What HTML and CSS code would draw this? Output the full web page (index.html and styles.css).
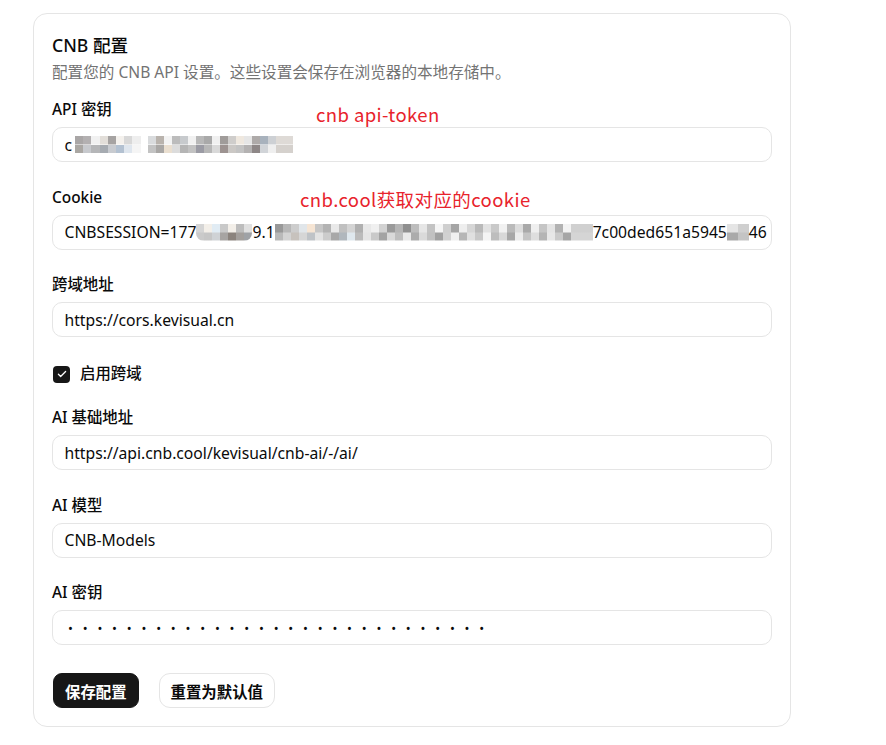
FILE: index.html
```html
<!DOCTYPE html>
<html lang="zh-CN">
<head>
<meta charset="utf-8">
<title>CNB 配置</title>
<link rel="stylesheet" href="styles.css">
</head>
<body>
<div class="page">
  <section class="card">
    <h1 class="title">CNB 配置</h1>
    <p class="subtitle">配置您的 CNB API 设置。这些设置会保存在浏览器的本地存储中。</p>
    <div class="form">
      <div class="field">
        <label class="label">API 密钥</label>
        <div class="input"><span>c</span><span class="mosaic m-api1"></span><span class="mosaic m-api2"></span></div>
        <span class="note note-token">cnb api-token</span>
      </div>
      <div class="field">
        <label class="label">Cookie</label>
        <div class="input"><span>CNBSESSION=177</span><span class="mosaic m-ck1"></span><span>9.1</span><span class="mosaic m-ck2"></span><span>7c00ded651a5945</span><span class="mosaic m-ck3"></span><span>46</span></div>
        <span class="note note-cookie">cnb.cool获取对应的cookie</span>
      </div>
      <div class="field">
        <label class="label">跨域地址</label>
        <div class="input">https://cors.kevisual.cn</div>
      </div>
      <div class="check-row">
        <span class="checkbox"><svg viewBox="0 0 16 16" width="12" height="12"><path d="M3.2 8.3l3 3 6.6-6.6" fill="none" stroke="#fff" stroke-width="1.7" stroke-linecap="round" stroke-linejoin="round"/></svg></span>
        <span class="check-label">启用跨域</span>
      </div>
      <div class="field">
        <label class="label">AI 基础地址</label>
        <div class="input">https://api.cnb.cool/kevisual/cnb-ai/-/ai/</div>
      </div>
      <div class="field">
        <label class="label">AI 模型</label>
        <div class="input">CNB-Models</div>
      </div>
      <div class="field">
        <label class="label">AI 密钥</label>
        <div class="input dots">•••••••••••••••••••••••••••••</div>
      </div>
      <div class="actions">
        <button class="btn btn-primary">保存配置</button>
        <button class="btn btn-outline">重置为默认值</button>
      </div>
    </div>
  </section>
</div>
</body>
</html>
```
FILE: styles.css
```css
* { box-sizing: border-box; }
html, body { margin: 0; padding: 0; background: #fff; }
body {
  font-family: "Noto Sans", "Noto Sans CJK SC", sans-serif;
  color: #0a0a0a;
}
.page { padding: 13px 0 0 33px; }
.card {
  width: 758px;
  border: 1px solid #e5e5e5;
  border-radius: 14px;
  padding: 18px 18px 18px 18px;
}
.title {
  margin: 0;
  font-size: 17.6px;
  line-height: 26px;
  font-weight: 500;
}
.subtitle {
  margin: 4px 0 0;
  font-size: 15.6px;
  line-height: 20px;
  color: #737373;
}
.form {
  margin-top: 18px;
  display: flex;
  flex-direction: column;
}
.field {
  position: relative;
  display: flex;
  flex-direction: column;
  gap: 7px;
  margin-bottom: 25.5px;
}
.label {
  font-size: 15.4px;
  line-height: 20px;
  font-weight: 500;
}
.input {
  height: 35px;
  border: 1px solid #e5e5e5;
  border-radius: 10px;
  padding: 0 11.5px;
  display: flex;
  align-items: center;
  font-size: 15.7px;
  white-space: nowrap;
  overflow: hidden;
}
.dots {
  letter-spacing: 9.8px;
  font-size: 13px;
  padding-left: 15px;
}
.mosaic {
  display: inline-block;
  height: 17px;
  flex: none;
}
.m-api1 {
  width: 66px;
  margin-left: 3px;
  background:
    linear-gradient(90deg, #a9a6a6 0 8px, #b3b0b1 8px 16px, #f1f1f1 16px 25px, #e2ded9 25px 33px, #a6a3a2 33px 41px, #f4f1ed 41px 49px, #d8d8d8 49px 57px, #eeeeee 57px 66px) top / 100% 50% no-repeat,
    linear-gradient(90deg, #aaa7a3 0 8px, #c7c9cd 8px 16px, #b5b6b8 16px 25px, #a6abb1 25px 33px, #c8cbd0 33px 41px, #b3c1d1 41px 49px, #dfe6ee 49px 57px, #f5f5f5 57px 66px) bottom / 100% 50% no-repeat;
}
.m-api2 {
  width: 145px;
  margin-left: 7px;
  background:
    linear-gradient(90deg, #d9dbdd 0 8px, #b9b3ad 8px 16px, #f3f3f3 16px 24px, #bcbcbc 24px 32px, #c7cacd 32px 40px, #f1f1f1 40px 48px, #b8b8b8 48px 56px, #a9a9a9 56px 64px, #f0f0f0 64px 72px, #a09c9a 72px 80px, #cfcdcb 80px 88px, #efe8df 88px 96px, #e6e6e6 96px 104px, #aeaaa9 104px 112px, #a8b2bd 112px 120px, #cdd0d4 120px 128px, #dedad6 128px 145px) top / 100% 50% no-repeat,
    linear-gradient(90deg, #c3c3c3 0 8px, #a9a7a5 8px 16px, #eadfd0 16px 24px, #dcdcdc 24px 32px, #b5b5b5 32px 40px, #c2c2c2 40px 48px, #9b9ba4 48px 56px, #b7b7b7 56px 64px, #d9d9d9 64px 72px, #9d9391 72px 80px, #cbc8c5 80px 88px, #c3c3c3 88px 96px, #b4b2b2 96px 104px, #8e8787 104px 112px, #d1d4d8 112px 120px, #efefef 120px 128px, #d5d1cd 128px 145px) bottom / 100% 50% no-repeat;
}
.m-ck1 {
  width: 56px;
  border-radius: 0 0 8px 8px;
  background:
    linear-gradient(90deg, #d5d5d5 0 8px, #f3efe9 8px 16px, #e1ecf4 16px 24px, #c9c9c9 24px 32px, #f3efe9 32px 40px, #bdbdbd 40px 48px, #e0e0e0 48px 58px) top / 100% 50% no-repeat,
    linear-gradient(90deg, #cacaca 0 8px, #c6c6c6 8px 16px, #cfd2d5 16px 24px, #a7a4a2 24px 32px, #8b837d 32px 40px, #a39f9c 40px 48px, #9fa2a6 48px 58px) bottom / 100% 50% no-repeat;
}
.m-ck2 {
  width: 318px;
  background:
    linear-gradient(90deg, #999 0 8px, #b7b7b7 8px 16px, #cdcdcd 16px 24px, #e1e6ea 24px 32px, #f6e5d4 32px 40px, #c6c6c6 40px 48px, #b3b3b3 48px 56px, #e9e9e9 56px 64px, #c0c0c0 64px 72px, #d4d4d4 72px 80px, #b0b0b0 80px 88px, #e8e8e8 88px 96px, #f0f0f0 96px 104px, #d2d2d2 104px 112px, #9a9a9a 112px 120px, #b5b5b5 120px 128px, #8f8f8f 128px 136px, #bdbdbd 136px 144px, #e6e6e6 144px 152px, #c3c3c3 152px 160px, #f5f5f5 160px 168px, #cfcfcf 168px 176px, #a5a5a5 176px 184px, #eeeeee 184px 192px, #d6d6d6 192px 200px, #b9b9b9 200px 208px, #e2e2e2 208px 216px, #c9c9c9 216px 224px, #f1f1f1 224px 232px, #bababa 232px 240px, #dcdcdc 240px 248px, #a9a9a9 248px 256px, #efefef 256px 264px, #c5c5c5 264px 272px, #e4e4e4 272px 280px, #b2b2b2 280px 288px, #f3f3f3 288px 296px, #d0d0d0 296px 318px) top / 100% 50% no-repeat,
    linear-gradient(90deg, #b9b9b9 0 8px, #d3d3d3 8px 16px, #c7c2bd 16px 24px, #d6d6d6 24px 32px, #bfc3c7 32px 40px, #e3e3e3 40px 48px, #cccccc 48px 56px, #a8a8a8 56px 64px, #b0b7bd 64px 72px, #dfe8ee 72px 80px, #bbbbbb 80px 88px, #e5e5e5 88px 96px, #c9c9c9 96px 104px, #a3a3a3 104px 112px, #d9d9d9 112px 120px, #bebebe 120px 128px, #e9e9e9 128px 136px, #acacac 136px 144px, #dadada 144px 152px, #c1c1c1 152px 160px, #a1a1a1 160px 168px, #d1d1d1 168px 176px, #f0f0f0 176px 184px, #b6b6b6 184px 192px, #e0e0e0 192px 200px, #c8c8c8 200px 208px, #f4f4f4 208px 216px, #bdbdbd 216px 224px, #d8d8d8 224px 232px, #a7a7a7 232px 240px, #ececec 240px 248px, #c4c4c4 248px 256px, #dedede 256px 264px, #b4b4b4 264px 272px, #e7e7e7 272px 280px, #cacaca 280px 288px, #a6a6a6 288px 296px, #d5d5d5 296px 318px) bottom / 100% 50% no-repeat;
}
.m-ck3 {
  width: 22px;
  background:
    linear-gradient(90deg, #e5e5e5 0 11px, #cfcfcf 11px 22px) top / 100% 50% no-repeat,
    linear-gradient(90deg, #a9a9a9 0 11px, #c4c4c4 11px 22px) bottom / 100% 50% no-repeat;
}
.note {
  position: absolute;
  font-family: "Microsoft YaHei", "Noto Sans CJK SC", sans-serif;
  font-size: 18.5px;
  line-height: 24px;
  letter-spacing: 0.4px;
  color: #e8232c;
  white-space: nowrap;
}
.note-token { left: 264px; top: 2px; }
.note-cookie { left: 248px; top: -1px; }
.check-row {
  display: flex;
  align-items: center;
  gap: 10px;
  height: 20px;
  margin-top: 1.5px;
  margin-bottom: 24px;
}
.checkbox {
  width: 17px;
  height: 17px;
  margin-left: 1px;
  border-radius: 4px;
  background: #171717;
  display: flex;
  align-items: center;
  justify-content: center;
}
.check-label {
  font-size: 15.4px;
  line-height: 20px;
  font-weight: 500;
}
.actions {
  display: flex;
  gap: 20px;
  margin-top: 2.5px;
}
.btn {
  height: 35px;
  border-radius: 9px;
  padding: 0 11px;
  font-family: "Noto Sans CJK SC", sans-serif;
  font-size: 15.4px;
  font-weight: 600;
  cursor: pointer;
}
.btn-primary {
  background: #171717;
  color: #fff;
  border: 1px solid #171717;
  margin-left: 1px;
}
.btn-outline {
  background: #fff;
  color: #0a0a0a;
  border: 1px solid #e5e5e5;
  border-radius: 11px;
}
```
